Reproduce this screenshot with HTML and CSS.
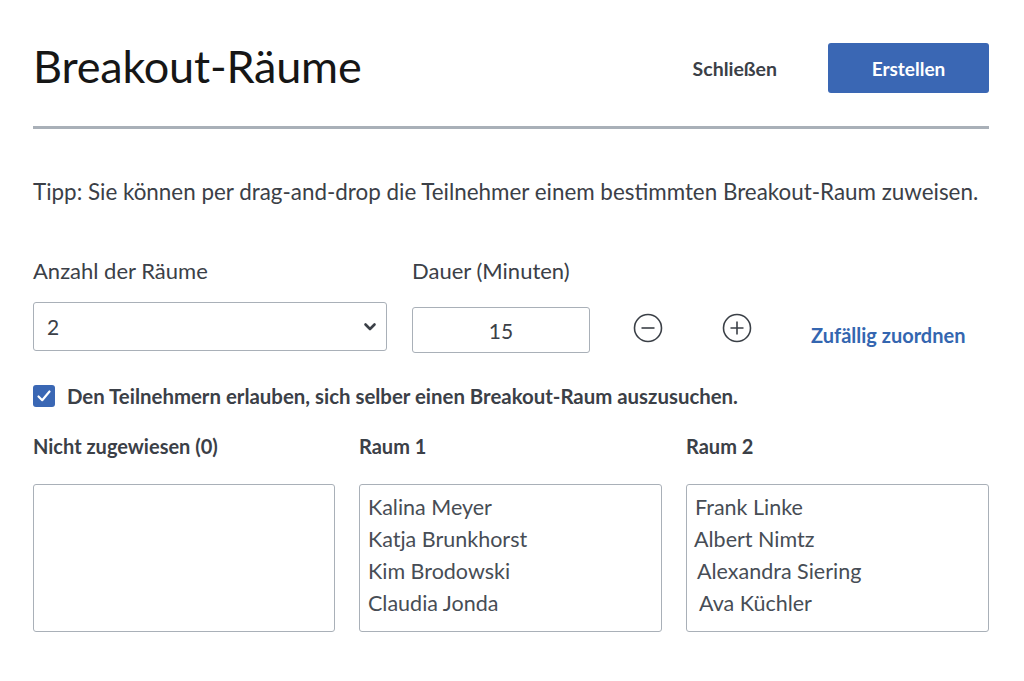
FILE: index.html
```html
<!DOCTYPE html>
<html lang="de">
<head>
  <meta charset="utf-8">
  <title>Breakout-Räume</title>
  <link rel="stylesheet" href="styles.css">
</head>
<body>
  <div class="page">
    <div class="head">
      <h1 class="title">Breakout-Räume</h1>
      <div class="head_actions">
        <span class="btn_link">Schließen</span>
        <span class="btn_primary">Erstellen</span>
      </div>
    </div>

    <p class="tipp">Tipp: Sie können per drag-and-drop die Teilnehmer einem bestimmten Breakout-Raum zuweisen.</p>

    <div class="settings">
      <div class="field field_rooms">
        <div class="label">Anzahl der Räume</div>
        <div class="select">
          <span>2</span>
          <svg width="14" height="10" viewBox="0 0 14 10"><path d="M2.5 2.5 L7 7 L11.5 2.5" fill="none" stroke="#3b4047" stroke-width="2.6" stroke-linecap="round" stroke-linejoin="round"/></svg>
        </div>
      </div>
      <div class="field field_time">
        <div class="label">Dauer (Minuten)</div>
        <div class="time_row">
          <div class="input">15</div>
          <svg class="round_btn" width="32" height="32" viewBox="0 0 32 32"><circle cx="16" cy="16" r="13.5" fill="none" stroke="#3b4047" stroke-width="1.6"/><path d="M9.5 16 H22.5" stroke="#3b4047" stroke-width="1.6"/></svg>
          <svg class="round_btn" width="32" height="32" viewBox="0 0 32 32"><circle cx="16" cy="16" r="13.5" fill="none" stroke="#3b4047" stroke-width="1.6"/><path d="M9.5 16 H22.5 M16 9.5 V22.5" stroke="#3b4047" stroke-width="1.6"/></svg>
          <span class="random">Zufällig zuordnen</span>
        </div>
      </div>
    </div>

    <div class="check_row">
      <span class="checkbox">
        <svg width="22" height="22" viewBox="0 0 22 22"><path d="M5.5 11.5 L9.2 15.2 L16.5 6.5" fill="none" stroke="#fff" stroke-width="2.2" stroke-linecap="round" stroke-linejoin="round"/></svg>
      </span>
      <span class="check_text">Den Teilnehmern erlauben, sich selber einen Breakout-Raum auszusuchen.</span>
    </div>

    <div class="rooms">
      <div class="room">
        <div class="room_title">Nicht zugewiesen (0)</div>
        <div class="room_box"></div>
      </div>
      <div class="room">
        <div class="room_title">Raum 1</div>
        <div class="room_box">
          <div class="person">Kalina Meyer</div>
          <div class="person">Katja Brunkhorst</div>
          <div class="person">Kim Brodowski</div>
          <div class="person">Claudia Jonda</div>
        </div>
      </div>
      <div class="room">
        <div class="room_title">Raum 2</div>
        <div class="room_box">
          <div class="person">Frank Linke</div>
          <div class="person shift_l">Albert Nimtz</div>
          <div class="person shift_r">Alexandra Siering</div>
          <div class="person shift_r2">Ava Küchler</div>
        </div>
      </div>
    </div>
  </div>
</body>
</html>
```

FILE: styles.css
```css
body {
  margin: 0;
  background: #fff;
  font-family: Lato, "Liberation Sans", sans-serif;
  color: #3b4047;
}
.page {
  padding: 0 35px 0 33px;
}
.head {
  display: flex;
  align-items: center;
  justify-content: space-between;
  padding: 43px 0 33px;
  border-bottom: 3px solid #a9b0b8;
}
.title {
  margin: 0;
  font-size: 45px;
  line-height: 46px;
  font-weight: 400;
  color: #161616;
  letter-spacing: -0.2px;
  padding-bottom: 4px;
}
.head_actions {
  display: flex;
  align-items: center;
}
.btn_link {
  font-size: 19.5px;
  font-weight: 700;
  color: #3b4047;
  margin-right: 51px;
}
.btn_primary {
  display: flex;
  align-items: center;
  justify-content: center;
  width: 161px;
  height: 50px;
  background: #3a67b4;
  border-radius: 3px;
  color: #fff;
  font-size: 19px;
  font-weight: 700;
}
.tipp {
  margin: 49px 0 0;
  font-size: 22.4px;
  line-height: 28px;
  color: #3b4047;
}
.settings {
  display: flex;
  margin-top: 52px;
}
.label {
  font-size: 22px;
  line-height: 26px;
  height: 44px;
}
.field_rooms {
  width: 354px;
  margin-right: 25px;
}
.select {
  display: flex;
  align-items: center;
  justify-content: space-between;
  height: 49px;
  box-sizing: border-box;
  border: 1px solid #a9b0b8;
  border-radius: 3px;
  padding: 0 9px 0 13px;
  font-size: 21px;
}
.time_row {
  display: flex;
  align-items: center;
  margin-top: 5px;
}
.input {
  width: 178px;
  height: 46px;
  box-sizing: border-box;
  border: 1px solid #a9b0b8;
  border-radius: 3px;
  display: flex;
  align-items: center;
  justify-content: center;
  font-size: 21px;
  margin-right: 42px;
}
.round_btn {
  margin-right: 57px;
  margin-bottom: 4px;
}
.round_btn + .round_btn {
  margin-right: 58px;
}
.random {
  font-size: 20px;
  font-weight: 700;
  color: #3466b0;
  padding-top: 10px;
}
.check_row {
  display: flex;
  align-items: center;
  margin-top: 31px;
}
.checkbox {
  width: 22px;
  height: 22px;
  background: #3a67b4;
  border-radius: 3px;
  margin-right: 12px;
  display: flex;
}
.check_text {
  font-size: 20.4px;
  font-weight: 700;
  color: #3b4047;
}
.rooms {
  display: grid;
  grid-template-columns: 302px 303px 303px;
  column-gap: 24px;
  margin-top: 26px;
}
.room_title {
  font-size: 20px;
  font-weight: 700;
  line-height: 24px;
}
.room_box {
  margin-top: 26px;
  height: 148px;
  box-sizing: border-box;
  border: 1px solid #a9b0b8;
  border-radius: 3px;
  padding: 6px 8px;
}
.person {
  font-size: 21.5px;
  line-height: 32px;
  color: #474d55;
}
.shift_l {
  margin-left: -1px;
}
.shift_r {
  margin-left: 2px;
}
.shift_r2 {
  margin-left: 4px;
}
```
